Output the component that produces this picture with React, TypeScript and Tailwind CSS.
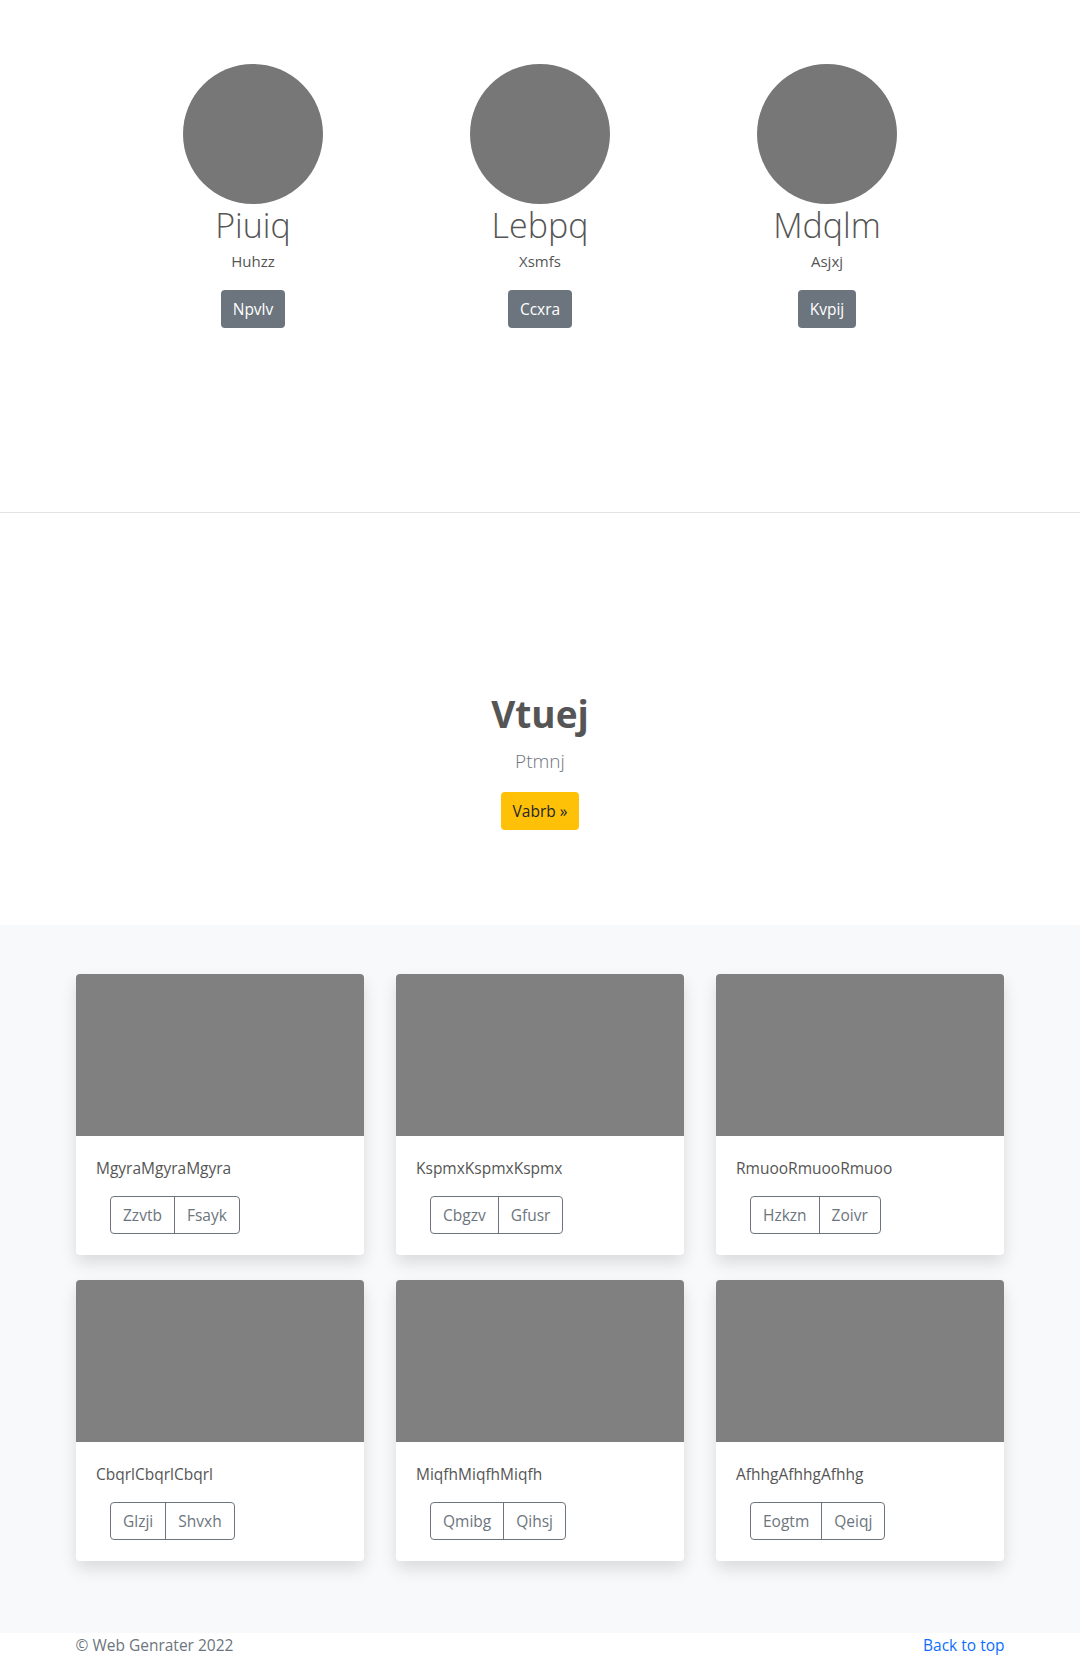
const team = [
  { name: 'Piuiq', role: 'Huhzz', action: 'Npvlv' },
  { name: 'Lebpq', role: 'Xsmfs', action: 'Ccxra' },
  { name: 'Mdqlm', role: 'Asjxj', action: 'Kvpij' },
];

const cards = [
  { title: 'MgyraMgyraMgyra', left: 'Zzvtb', right: 'Fsayk' },
  { title: 'KspmxKspmxKspmx', left: 'Cbgzv', right: 'Gfusr' },
  { title: 'RmuooRmuooRmuoo', left: 'Hzkzn', right: 'Zoivr' },
  { title: 'CbqrlCbqrlCbqrl', left: 'Glzji', right: 'Shvxh' },
  { title: 'MiqfhMiqfhMiqfh', left: 'Qmibg', right: 'Qihsj' },
  { title: 'AfhhgAfhhgAfhhg', left: 'Eogtm', right: 'Qeiqj' },
];

function TeamMember({ name, role, action }: { name: string; role: string; action: string }) {
  return (
    <div className="flex flex-col items-center text-center">
      <div className="w-[140px] h-[140px] rounded-full bg-[#777777] mb-[4px]" />
      <h2 className="text-[34px] font-light leading-none text-[#555555]">{name}</h2>
      <p className="mt-[7px] text-[15px] leading-6 text-[#555555]">{role}</p>
      <button className="mt-[17px] h-[38px] px-3 rounded bg-[#6c757d] text-white text-[15.5px] leading-6">
        {action}
      </button>
    </div>
  );
}

function AlbumCard({ title, left, right }: { title: string; left: string; right: string }) {
  return (
    <div className="bg-white rounded overflow-hidden shadow-[0_8px_16px_rgba(0,0,0,0.12)]">
      <div className="h-[162px] bg-[#808080]" />
      <div className="px-5 pt-5 pb-[21px]">
        <p className="text-[15.5px] leading-6 text-[#555555]">{title}</p>
        <div className="mt-4 ml-[14px] inline-flex h-[38px] border border-[#6c757d] rounded text-[#6c757d] text-[15.5px] leading-6">
          <button className="px-3">{left}</button>
          <button className="px-3 border-l border-[#6c757d]">{right}</button>
        </div>
      </div>
    </div>
  );
}

export default function App() {
  return (
    <div className="bg-white font-['Open_Sans',sans-serif] text-[#555555]">
      <section className="h-[512px] pt-16">
        <div className="w-[861px] mx-auto grid grid-cols-3">
          {team.map((m) => (
            <TeamMember key={m.name} {...m} />
          ))}
        </div>
      </section>

      <hr className="border-0 h-px bg-[#e3e3e3]" />

      <section className="pt-[182px] pb-[95px] flex flex-col items-center text-center">
        <h1 className="text-[37px] font-bold leading-none text-[#555555]">Vtuej</h1>
        <p className="mt-[15px] text-[19px] font-light leading-[28.5px] text-[#6c757d]">Ptmnj</p>
        <button className="mt-[16px] h-[38px] px-3 rounded bg-[#ffc107] text-[#212529] text-[15.5px] leading-6">
          Vabrb »
        </button>
      </section>

      <section className="bg-[#f8f9fa] pt-[49px] pb-[72px]">
        <div className="w-[928px] mx-auto grid grid-cols-3 gap-x-8 gap-y-[25px]">
          {cards.map((c) => (
            <AlbumCard key={c.title} {...c} />
          ))}
        </div>
      </section>

      <footer className="pb-10">
        <div className="w-[929px] mx-auto flex justify-between text-[15.5px] leading-6">
          <p className="text-[#6c757d]">© Web Genrater 2022</p>
          <a href="#" className="text-[#0d6efd]">Back to top</a>
        </div>
      </footer>
    </div>
  );
}
